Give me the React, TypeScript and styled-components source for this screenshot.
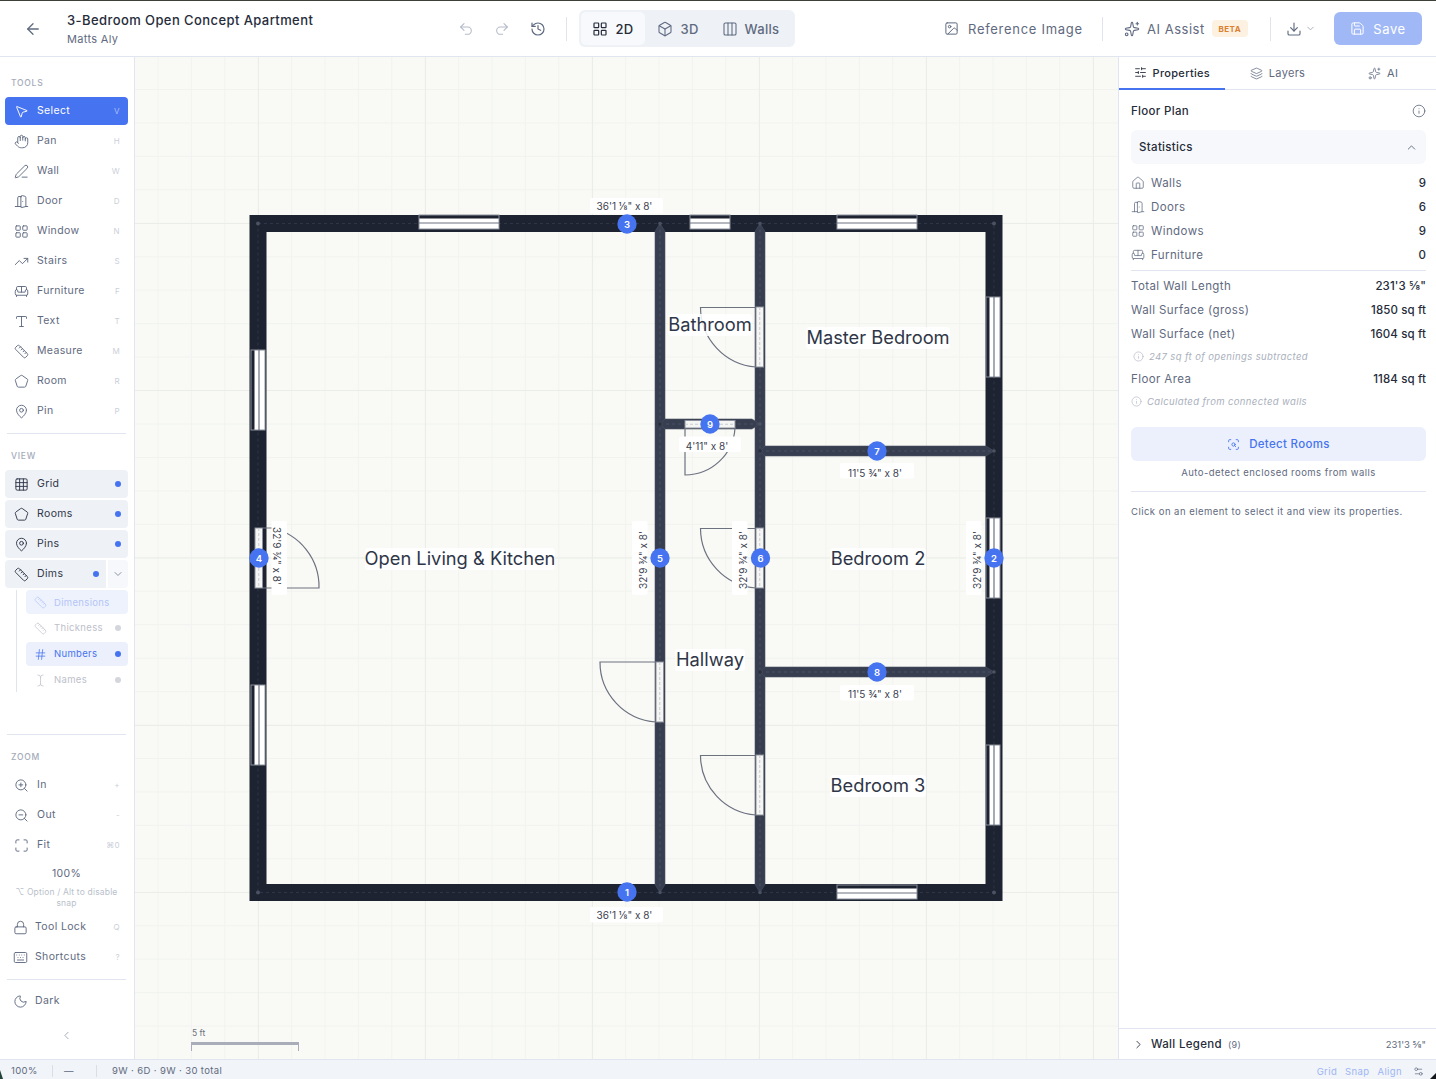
import React from "react";
import styled, { createGlobalStyle } from "styled-components";
import {
  ArrowLeft, Undo2, Redo2, History, LayoutGrid, Box, Columns3, Image as ImageIcon, Sparkles, Download,
  ChevronDown, ChevronUp, ChevronLeft, ChevronRight, Save, SlidersHorizontal, Layers, Info, Home, DoorOpen,
  MousePointer2, Hand, PenLine, TrendingUp, Sofa, Type, Ruler, Pentagon, MapPin, Grid3x3, Hash, TextCursor,
  ZoomIn, ZoomOut, Maximize, Lock, Keyboard, Moon, ScanSearch, Settings2,
} from "lucide-react";

const FONT = `Inter, "Noto Sans", "Liberation Sans", sans-serif`;
const BLUE = "#4673f0";
const INK = "#5f6a80";
const BORDER = "#e0e5f0";

const Global = createGlobalStyle`
  html, body { margin: 0; padding: 0; height: 100%; background: #fff; }
  body { font-family: ${FONT}; overflow: hidden; }
  #root { height: 100%; }
  * { box-sizing: border-box; }
`;

const Page = styled.div`
  position: relative; width: 1436px; height: 1079px; display: flex; flex-direction: column;
  border-top: 1px solid #3c4038; overflow: hidden; color: ${INK}; letter-spacing: 0.02em;
`;
const Header = styled.header`
  height: 56px; flex: none; display: flex; align-items: center; border-bottom: 1px solid ${BORDER}; background: #fff;
`;
const BackButton = styled.div` width: 67px; display: flex; justify-content: center; padding-right: 1px; color: ${INK}; `;
const TitleBlock = styled.div` width: 391px; display: flex; flex-direction: column; gap: 5px; padding-top: 1px; `;
const Title = styled.div` font-size: 13px; line-height: 15px; font-weight: 500; color: #262c3a; letter-spacing: 0.032em; `;
const Sub = styled.div` font-size: 11px; line-height: 13px; color: ${INK}; letter-spacing: 0.03em; `;
const HistoryGroup = styled.div` display: flex; gap: 20px; width: 108px; `;
const HistIcon = styled.span<{ $dim?: boolean }>` display: flex; color: ${(p) => (p.$dim ? "#b4bbc8" : INK)}; `;
const VDivider = styled.div` width: 1px; height: 24px; background: #e0e4ec; flex: none; `;
const Segment = styled.div`
  margin-left: 12px; height: 37px; width: 216px; padding: 2px; border-radius: 6px; background: #eef1f6; display: flex; align-items: stretch;
`;
const SegItem = styled.div<{ $active?: boolean; $w: number }>`
  width: ${(p) => p.$w}px; display: flex; align-items: center; justify-content: center; gap: 7px; border-radius: 5px; font-size: 13px; font-weight: 500;
  color: ${(p) => (p.$active ? "#262c3a" : INK)}; background: ${(p) => (p.$active ? "#f7f9fc" : "transparent")};
`;
const RefButton = styled.div` margin-left: 149px; width: 158px; display: flex; align-items: center; gap: 9px; font-size: 13px; letter-spacing: 0.055em; `;
const AiButton = styled.div` margin-left: 21px; width: 146px; display: flex; align-items: center; gap: 7px; font-size: 13px; letter-spacing: 0.04em; `;
const Beta = styled.span`
  background: #fdf1e2; color: #d9812f; font-size: 8px; font-weight: 700; letter-spacing: 0.06em; height: 17px; width: 36px;
  border-radius: 4px; display: flex; align-items: center; justify-content: center;
`;
const DownloadButton = styled.div` margin-left: 15px; width: 49px; display: flex; align-items: center; gap: 3px; `;
const SaveButton = styled.div`
  width: 88px; height: 33px; border-radius: 6px; background: #a0b9f6; color: #fff; font-size: 13px; letter-spacing: 0.05em; margin-left: -1px;
  display: flex; align-items: center; justify-content: center; gap: 8px;
`;

const Main = styled.div` flex: 1; display: flex; min-height: 0; `;
const Sidebar = styled.aside`
  width: 135px; flex: none; border-right: 1px solid ${BORDER}; padding: 20px 6px 0 5px; display: flex; flex-direction: column; background: #fff;
`;
const SectionLabel = styled.div`
  font-size: 8.5px; line-height: 12px; letter-spacing: 0.09em; color: #a4abb9; padding-left: 6px; font-weight: 500; margin-bottom: 8px;
`;
const Stack = styled.div` display: flex; flex-direction: column; gap: 2px; `;
const BottomStack = styled(Stack)` margin-top: 4px; `;
const Row = styled.div<{ $active?: boolean; $tint?: boolean }>`
  height: 28px; flex: none; display: flex; align-items: center; border-radius: 4px; padding: 0 8px 0 9px;
  font-size: 10.5px; letter-spacing: 0.035em;
  background: ${(p) => (p.$active ? BLUE : p.$tint ? "#eef1f6" : "transparent")};
  color: ${(p) => (p.$active ? "#fff" : p.$tint ? "#2e3546" : INK)};
`;
const RowIcon = styled.span` width: 23px; flex: none; display: flex; `;
const RowText = styled.span` flex: 1; white-space: nowrap; padding-bottom: 1px; `;
const Key = styled.span<{ $active?: boolean }>` font-size: 8px; color: ${(p) => (p.$active ? "#a9bdf7" : "#cbd0d9")}; `;
const Dot = styled.span<{ $off?: boolean }>`
  width: 6px; height: 6px; border-radius: 50%; flex: none; margin-right: -1px;
  background: ${(p) => (p.$off ? "#d3d6dc" : BLUE)};
`;
const Split = styled.div` display: flex; gap: 2px; height: 28px; `;
const SplitMain = styled(Row)` flex: 1; border-radius: 4px 0 0 4px; `;
const Caret = styled.div` width: 20px; background: #f6f8fb; border-radius: 0 4px 4px 0; display: flex; align-items: center; justify-content: center; color: #8a93a5; `;
const SubTree = styled.div`
  margin: 2px 0 0 11px; padding-left: 9px; border-left: 1px solid #e0e4ec; display: flex; flex-direction: column; gap: 2px; height: 102px;
`;
const SubRow = styled.div<{ $tint?: string; $color: string }>`
  height: 24px; flex: none; display: flex; align-items: center; padding: 0 8px; border-radius: 4px; font-size: 9.5px; letter-spacing: 0.035em;
  background: ${(p) => p.$tint || "transparent"}; color: ${(p) => p.$color};
`;
const SubIcon = styled.span` width: 20px; flex: none; display: flex; `;
const Divider = styled.div<{ $top?: number; $bottom?: number }>`
  height: 1px; background: ${BORDER}; margin: ${(p) => p.$top ?? 0}px 2px ${(p) => p.$bottom ?? 0}px 2px; flex: none;
`;
const Percent = styled.div` text-align: center; font-size: 10.5px; line-height: 14px; margin-top: 8px; color: ${INK}; `;
const Hint = styled.div` text-align: center; font-size: 8.5px; line-height: 11px; margin-top: 6px; color: #b9bfcb; padding: 0 2px; letter-spacing: 0.02em; `;
const ToolRow = styled(Row)` padding-left: 8px; `;
const ToolIcon = styled.span` width: 22px; flex: none; display: flex; `;
const Collapse = styled.div` display: flex; justify-content: center; margin-top: 14px; color: #99a1b1; `;

const Canvas = styled.main` flex: 1; min-width: 0; background: #f9faf6; `;
const Plan = styled.svg` display: block; width: 100%; height: 100%; letter-spacing: 0; `;

const Panel = styled.aside` width: 318px; flex: none; border-left: 1px solid ${BORDER}; display: flex; flex-direction: column; background: #fff; `;
const Tabs = styled.div` height: 33px; flex: none; display: flex; border-bottom: 1px solid ${BORDER}; `;
const Tab = styled.div<{ $active?: boolean }>`
  flex: 1; display: flex; align-items: center; justify-content: center; gap: 6px; font-size: 11px; margin-bottom: -1px;
  color: ${(p) => (p.$active ? "#262c3a" : INK)}; font-weight: ${(p) => (p.$active ? 500 : 400)};
  border-bottom: 2px solid ${(p) => (p.$active ? BLUE : "transparent")}; padding-top: ${(p) => (p.$active ? 0 : 1)}px;
`;
const Body = styled.div` flex: 1; padding: 0 10px 0 12px; display: flex; flex-direction: column; `;
const PanelHead = styled.div` height: 40px; padding-top: 1px; display: flex; align-items: center; justify-content: space-between; font-size: 11.5px; font-weight: 500; color: #262c3a; `;
const InfoIcon = styled.span` display: flex; color: ${INK}; `;
const Accordion = styled.div`
  height: 34px; border-radius: 6px; background: #f6f8fb; padding: 0 8px; display: flex; align-items: center; justify-content: space-between;
  font-size: 11.5px; font-weight: 500; color: #262c3a; margin-bottom: 7px;
`;
const StatRow = styled.div`
  height: 24px; flex: none; display: flex; align-items: center; justify-content: space-between; font-size: 11.5px; color: ${INK}; letter-spacing: 0.035em;
`;
const StatLabel = styled.span` display: flex; align-items: center; gap: 6px; `;
const StatValue = styled.span` color: #262c3a; font-weight: 500; letter-spacing: 0.01em; `;
const Rule = styled.div<{ $top?: number; $bottom?: number }>` height: 1px; background: ${BORDER}; margin: ${(p) => p.$top ?? 0}px 0 ${(p) => p.$bottom ?? 0}px; flex: none; `;
const Note = styled.div<{ $indent?: number }>`
  height: 21px; flex: none; display: flex; align-items: center; gap: 5px; font-size: 9.5px; font-style: italic; color: #aab0bd; padding-left: ${(p) => p.$indent ?? 0}px; letter-spacing: 0.04em;
`;
const Detect = styled.div`
  height: 34px; margin-top: 15px; flex: none; border-radius: 6px; background: #ebf0fc; color: ${BLUE}; font-size: 11.5px; font-weight: 500;
  display: flex; align-items: center; justify-content: center; gap: 9px;
`;
const DetectHint = styled.div` text-align: center; font-size: 9.5px; line-height: 12px; margin: 6px 0 12px; color: ${INK}; letter-spacing: 0.05em; `;
const ClickHint = styled.div` font-size: 9.5px; line-height: 12px; margin-top: 14px; color: ${INK}; letter-spacing: 0.05em; `;
const Legend = styled.div`
  height: 31px; flex: none; border-top: 1px solid ${BORDER}; display: flex; align-items: center; padding: 0 10px 0 13px; font-size: 11.5px; color: #262c3a; font-weight: 500;
`;
const LegendCount = styled.span` margin-left: 6px; font-size: 9px; font-weight: 400; color: ${INK}; `;
const LegendLen = styled.span` margin-left: auto; font-size: 9.5px; font-weight: 400; color: ${INK}; letter-spacing: 0; `;
const LegendIcon = styled.span` display: flex; width: 19px; `;

const Status = styled.footer`
  height: 20px; flex: none; background: #f1f4f8; border-top: 1px solid ${BORDER}; display: flex; align-items: center; padding-top: 3px; font-size: 9.5px; color: ${INK}; letter-spacing: 0.04em;
`;
const StatusCell = styled.span<{ $w: number; $sep?: boolean; $pad?: number }>`
  width: ${(p) => p.$w}px; padding-left: ${(p) => p.$pad ?? 11}px; height: 12px; line-height: 12px; flex: none; border-right: ${(p) => (p.$sep ? "1px solid #d9dee8" : "none")};
`;
const StatusRight = styled.div` margin-left: auto; display: flex; align-items: center; gap: 8px; padding-right: 12px; color: #9db4f4; `;
const SettingsIcon = styled.span` display: flex; color: ${INK}; margin-left: 3px; `;
const CornerLeft = styled.div`
  position: absolute; left: 0; bottom: 0; width: 3px; height: 9px; background: #23443a; clip-path: polygon(0 0, 100% 100%, 0 100%);
`;
const CornerRight = styled.div`
  position: absolute; right: 0; bottom: 0; width: 6px; height: 6px; background: #15181c; clip-path: polygon(100% 0, 100% 100%, 0 100%);
`;

const tools: [string, any, string][] = [
  ["Select", MousePointer2, "V"], ["Pan", Hand, "H"], ["Wall", PenLine, "W"], ["Door", DoorOpen, "D"], ["Window", LayoutGrid, "N"],
  ["Stairs", TrendingUp, "S"], ["Furniture", Sofa, "F"], ["Text", Type, "T"], ["Measure", Ruler, "M"], ["Room", Pentagon, "R"], ["Pin", MapPin, "P"],
];

const WALL_DARK = "#1d2330";
const WALL_IN = "#373e4f";

const range = (from: number, to: number, step: number) => {
  const out: number[] = [];
  for (let v = from; v <= to; v += step) out.push(v);
  return out;
};

function Win({ x, y, len, vertical }: { x: number; y: number; len: number; vertical?: boolean }) {
  if (vertical) {
    return (
      <g>
        <rect x={x + 3.5} y={y} width={10.5} height={len} fill="#fff" />
        <rect x={x} y={y} width={14} height={len} fill="none" stroke="#8b909c" strokeWidth={1} />
        <line x1={x + 8} y1={y} x2={x + 8} y2={y + len} stroke="#6c7280" strokeWidth={1.2} />
      </g>
    );
  }
  return (
    <g>
      <rect x={x} y={y + 3.5} width={len} height={10.5} fill="#fff" />
      <rect x={x} y={y} width={len} height={14} fill="none" stroke="#8b909c" strokeWidth={1} />
      <line x1={x} y1={y + 8} x2={x + len} y2={y + 8} stroke="#6c7280" strokeWidth={1.2} />
    </g>
  );
}

function DoorRect({ x, y, len, horizontal }: { x: number; y: number; len: number; horizontal?: boolean }) {
  return horizontal ? (
    <g>
      <rect x={x} y={y} width={len} height={7.5} fill="#f5f5f4" stroke="#8b909c" />
      <line x1={x} y1={y + 3.75} x2={x + len} y2={y + 3.75} stroke="#c9ccd2" strokeDasharray="3 2" />
    </g>
  ) : (
    <g>
      <rect x={x} y={y} width={7.5} height={len} fill="#f5f5f4" stroke="#8b909c" />
      <line x1={x + 3.75} y1={y} x2={x + 3.75} y2={y + len} stroke="#c9ccd2" strokeDasharray="3 2" />
    </g>
  );
}

function Dim({ cx, cy, text, rot, w = 74, tx = -2, ty = 0 }: { cx: number; cy: number; text: string; rot?: number; w?: number; tx?: number; ty?: number }) {
  const top = rot ? cy - 11 : cy - 8;
  return (
    <g transform={rot ? `rotate(${rot} ${cx} ${cy})` : undefined}>
      <rect x={cx - w / 2} y={top} width={w} height={15.5} rx={2} fill="#fff" />
      <text x={cx + tx} y={cy + 3.5 + ty} textAnchor="middle" fontSize={10} fontFamily={FONT} fill="#3b4150">{text}</text>
    </g>
  );
}

function RoomLabel({ cx, cy, text, w }: { cx: number; cy: number; text: string; w: number }) {
  return (
    <g>
      <rect x={cx - w / 2} y={cy - 11} width={w} height={22} rx={3} fill="#fff" opacity={0.85} />
      <text x={cx} y={cy + 6} textAnchor="middle" fontSize={18.3} fontFamily={FONT} fill="#2f3648">{text}</text>
    </g>
  );
}

function Badge({ cx, cy, n }: { cx: number; cy: number; n: number }) {
  return (
    <g>
      <circle cx={cx} cy={cy} r={9.7} fill={BLUE} />
      <text x={cx} y={cy + 3.5} textAnchor="middle" fontSize={9.5} fontWeight={600} fontFamily={FONT} fill="#fff">{n}</text>
    </g>
  );
}

function VWall({ x, y1, y2 }: { x: number; y1: number; y2: number }) {
  const p = `${x - 5},${y1 + 8} ${x},${y1} ${x + 5},${y1 + 8} ${x + 5},${y2 - 8} ${x},${y2} ${x - 5},${y2 - 8}`;
  return (
    <g>
      <polygon points={p} fill={WALL_IN} stroke="#4b5263" strokeWidth={0.6} />
      <line x1={x} y1={y1} x2={x} y2={y2} stroke="#4e5668" strokeWidth={0.8} strokeDasharray="3 3" />
      <circle cx={x} cy={y1} r={1.8} fill="#4b5263" />
      <circle cx={x} cy={y2} r={1.8} fill="#4b5263" />
    </g>
  );
}

function HWall({ y, x1, x2 }: { y: number; x1: number; x2: number }) {
  const p = `${x1 + 5},${y - 5} ${x2 - 8},${y - 5} ${x2},${y} ${x2 - 8},${y + 5} ${x1 + 5},${y + 5} ${x1},${y}`;
  return (
    <g>
      <polygon points={p} fill={WALL_IN} stroke="#4b5263" strokeWidth={0.6} />
      <line x1={x1} y1={y} x2={x2} y2={y} stroke="#4e5668" strokeWidth={0.8} strokeDasharray="3 3" />
      <circle cx={x1} cy={y} r={1.8} fill="#2a3040" />
      <circle cx={x2} cy={y} r={1.8} fill="#4b5263" />
    </g>
  );
}

const LEAF = { fill: "none", stroke: "#6d7280", strokeWidth: 1.2 };

function FloorPlan() {
  return (
    <Plan viewBox="135 57 983 1002" preserveAspectRatio="xMinYMin meet">
      <g stroke="#f2f3ef" strokeWidth={1}>
        {range(158, 1118, 33.4).map((x) => <line key={x} x1={x} y1={57} x2={x} y2={1059} />)}
        {range(89.5, 1059, 33.45).map((y) => <line key={y} x1={135} y1={y} x2={1118} y2={y} />)}
      </g>
      <g stroke="#ebede8" strokeWidth={1}>
        {[258.5, 425.5, 592.5, 759.5, 926.5, 1093.5].map((x) => <line key={x} x1={x} y1={57} x2={x} y2={1059} />)}
        {[223.5, 390.5, 558, 725.5, 892.5].map((y) => <line key={y} x1={135} y1={y} x2={1118} y2={y} />)}
      </g>

      <rect x={258} y={223.5} width={736} height={669} fill="none" stroke={WALL_DARK} strokeWidth={17} strokeLinejoin="miter" />
      <rect x={258} y={223.5} width={736} height={669} fill="none" stroke="#333a4a" strokeWidth={0.8} strokeDasharray="3 3" />
      {[[258, 223.5], [994, 223.5], [258, 892.5], [994, 892.5]].map(([x, y]) => <circle key={`${x}-${y}`} cx={x} cy={y} r={2} fill="#4b5263" />)}

      <VWall x={660} y1={223.5} y2={892.5} />
      <VWall x={760} y1={223.5} y2={892.5} />
      <HWall y={451} x1={760} x2={994} />
      <HWall y={672} x1={760} x2={994} />
      <HWall y={424} x1={660} x2={760} />

      <Win x={419} y={215} len={80} />
      <Win x={690} y={215} len={40} />
      <Win x={837} y={215} len={80} />
      <Win x={837} y={885} len={80} />
      <Win x={986} y={297} len={80} vertical />
      <Win x={986} y={518} len={80} vertical />
      <Win x={986} y={745} len={80} vertical />
      <Win x={251} y={350} len={80} vertical />
      <Win x={251} y={685} len={80} vertical />

      <DoorRect x={756} y={307} len={60} />
      <DoorRect x={756} y={528} len={60} />
      <DoorRect x={756} y={755} len={60} />
      <DoorRect x={656} y={662} len={60} />
      <DoorRect x={685} y={420.5} len={50} horizontal />
      <DoorRect x={255} y={528} len={60} />

      <path d="M756 307.5 H700.5 A60 60 0 0 0 756 367" {...LEAF} />
      <path d="M756 528.5 H700.5 A60 60 0 0 0 756 588" {...LEAF} />
      <path d="M756 755.5 H700.5 A60 60 0 0 0 756 815" {...LEAF} />
      <path d="M656 662 H600 A60 60 0 0 0 656 722" {...LEAF} />
      <path d="M685 428 V475 A50 50 0 0 0 735 428" {...LEAF} />
      <path d="M263 528 H272 A60 60 0 0 1 319 588 H263" {...LEAF} />

      <Dim cx={626.5} cy={206} text={'36\'1 ⅛" x 8\''} w={73} />
      <Dim cx={626.5} cy={915} text={'36\'1 ⅛" x 8\''} w={73} />
      <Dim cx={877} cy={471} text={'11\'5 ¾" x 8\''} w={74} ty={2} />
      <Dim cx={877} cy={693} text={'11\'5 ¾" x 8\''} w={74} ty={1} />
      <Dim cx={710} cy={444.5} text={'4\'11" x 8\''} w={62} tx={-3} ty={1.5} />
      <Dim cx={643} cy={558} rot={-90} text={'32\'9 ¾" x 8\''} />
      <Dim cx={743} cy={558} rot={-90} text={'32\'9 ¾" x 8\''} />
      <Dim cx={977} cy={558} rot={-90} text={'32\'9 ¾" x 8\''} />
      <Dim cx={276} cy={558} rot={90} text={'32\'9 ¾" x 8\''} />

      <RoomLabel cx={710} cy={325} text="Bathroom" w={84} />
      <RoomLabel cx={878} cy={338} text="Master Bedroom" w={144} />
      <RoomLabel cx={460} cy={559} text="Open Living & Kitchen" w={190} />
      <RoomLabel cx={878} cy={559} text="Bedroom 2" w={96} />
      <RoomLabel cx={710} cy={660} text="Hallway" w={70} />
      <RoomLabel cx={878} cy={786} text="Bedroom 3" w={96} />

      <Badge cx={627} cy={892} n={1} />
      <Badge cx={994} cy={558} n={2} />
      <Badge cx={627} cy={224} n={3} />
      <Badge cx={259} cy={558} n={4} />
      <Badge cx={660} cy={558} n={5} />
      <Badge cx={760.5} cy={558} n={6} />
      <Badge cx={877} cy={451} n={7} />
      <Badge cx={877} cy={672} n={8} />
      <Badge cx={710} cy={424} n={9} />

      <text x={192} y={1036} fontSize={8.5} fontFamily={FONT} fill="#6b7280">5 ft</text>
      <rect x={191.5} y={1042} width={107} height={3} fill="#a8adb9" />
      <line x1={191.5} y1={1042} x2={191.5} y2={1051} stroke="#a8adb9" />
      <line x1={298.5} y1={1042} x2={298.5} y2={1051} stroke="#a8adb9" />
    </Plan>
  );
}

export default function App() {
  return (
    <Page>
      <Global />
      <Header>
        <BackButton><ArrowLeft size={18} strokeWidth={1.7} /></BackButton>
        <TitleBlock>
          <Title>3-Bedroom Open Concept Apartment</Title>
          <Sub>Matts Aly</Sub>
        </TitleBlock>
        <HistoryGroup>
          <HistIcon $dim><Undo2 size={16} strokeWidth={1.6} /></HistIcon>
          <HistIcon $dim><Redo2 size={16} strokeWidth={1.6} /></HistIcon>
          <HistIcon><History size={16} strokeWidth={1.8} /></HistIcon>
        </HistoryGroup>
        <VDivider />
        <Segment>
          <SegItem $active $w={64}><LayoutGrid size={16} strokeWidth={1.8} />2D</SegItem>
          <SegItem $w={66}><Box size={16} strokeWidth={1.6} />3D</SegItem>
          <SegItem $w={79}><Columns3 size={16} strokeWidth={1.6} />Walls</SegItem>
        </Segment>
        <RefButton><ImageIcon size={15} strokeWidth={1.6} />Reference Image</RefButton>
        <VDivider />
        <AiButton><Sparkles size={16} strokeWidth={1.6} />AI Assist<Beta>BETA</Beta></AiButton>
        <VDivider />
        <DownloadButton><Download size={16} strokeWidth={1.7} /><ChevronDown size={11} color="#a4abb9" /></DownloadButton>
        <SaveButton><Save size={15} strokeWidth={1.6} />Save</SaveButton>
      </Header>
      <Main>
        <Sidebar>
          <SectionLabel>TOOLS</SectionLabel>
          <Stack>
            {tools.map(([name, Icon, key], i) => (
              <Row key={name} $active={i === 0}>
                <RowIcon><Icon size={15} strokeWidth={1.5} /></RowIcon>
                <RowText>{name}</RowText>
                <Key $active={i === 0}>{key}</Key>
              </Row>
            ))}
          </Stack>
          <Divider $top={8} $bottom={16} />
          <SectionLabel>VIEW</SectionLabel>
          <Stack>
            <Row $tint><RowIcon><Grid3x3 size={15} strokeWidth={1.5} /></RowIcon><RowText>Grid</RowText><Dot /></Row>
            <Row $tint><RowIcon><Pentagon size={15} strokeWidth={1.5} /></RowIcon><RowText>Rooms</RowText><Dot /></Row>
            <Row $tint><RowIcon><MapPin size={15} strokeWidth={1.5} /></RowIcon><RowText>Pins</RowText><Dot /></Row>
            <Split>
              <SplitMain $tint><RowIcon><Ruler size={15} strokeWidth={1.5} /></RowIcon><RowText>Dims</RowText><Dot /></SplitMain>
              <Caret><ChevronDown size={12} /></Caret>
            </Split>
          </Stack>
          <SubTree>
            <SubRow $tint="#eef2fd" $color="#b3c5f6"><SubIcon><Ruler size={13} strokeWidth={1.3} /></SubIcon>Dimensions</SubRow>
            <SubRow $color="#bdc1ca"><SubIcon><Ruler size={13} strokeWidth={1.3} /></SubIcon><RowText>Thickness</RowText><Dot $off /></SubRow>
            <SubRow $tint="#ebf0fc" $color={BLUE}><SubIcon><Hash size={13} strokeWidth={1.4} /></SubIcon><RowText>Numbers</RowText><Dot /></SubRow>
            <SubRow $color="#bdc1ca"><SubIcon><TextCursor size={13} strokeWidth={1.3} /></SubIcon><RowText>Names</RowText><Dot $off /></SubRow>
          </SubTree>
          <Divider $top={42} $bottom={16} />
          <SectionLabel>ZOOM</SectionLabel>
          <Stack>
            <Row><RowIcon><ZoomIn size={15} strokeWidth={1.5} /></RowIcon><RowText>In</RowText><Key>+</Key></Row>
            <Row><RowIcon><ZoomOut size={15} strokeWidth={1.5} /></RowIcon><RowText>Out</RowText><Key>-</Key></Row>
            <Row><RowIcon><Maximize size={15} strokeWidth={1.5} /></RowIcon><RowText>Fit</RowText><Key>⌘0</Key></Row>
          </Stack>
          <Percent>100%</Percent>
          <Hint>⌥ Option / Alt to disable snap</Hint>
          <BottomStack>
            <ToolRow><ToolIcon><Lock size={15} strokeWidth={1.5} /></ToolIcon><RowText>Tool Lock</RowText><Key>Q</Key></ToolRow>
            <ToolRow><ToolIcon><Keyboard size={15} strokeWidth={1.5} /></ToolIcon><RowText>Shortcuts</RowText><Key>?</Key></ToolRow>
          </BottomStack>
          <Divider $top={8} $bottom={7} />
          <ToolRow><ToolIcon><Moon size={15} strokeWidth={1.5} /></ToolIcon><RowText>Dark</RowText></ToolRow>
          <Collapse><ChevronLeft size={13} strokeWidth={1.6} /></Collapse>
        </Sidebar>
        <Canvas><FloorPlan /></Canvas>
        <Panel>
          <Tabs>
            <Tab $active><SlidersHorizontal size={13} strokeWidth={1.6} />Properties</Tab>
            <Tab><Layers size={13} strokeWidth={1.4} />Layers</Tab>
            <Tab><Sparkles size={13} strokeWidth={1.4} />AI</Tab>
          </Tabs>
          <Body>
            <PanelHead>Floor Plan<InfoIcon><Info size={14} strokeWidth={1.4} /></InfoIcon></PanelHead>
            <Accordion>Statistics<ChevronUp size={13} strokeWidth={1.7} color={INK} /></Accordion>
            <StatRow><StatLabel><Home size={14} strokeWidth={1.3} />Walls</StatLabel><StatValue>9</StatValue></StatRow>
            <StatRow><StatLabel><DoorOpen size={14} strokeWidth={1.3} />Doors</StatLabel><StatValue>6</StatValue></StatRow>
            <StatRow><StatLabel><LayoutGrid size={14} strokeWidth={1.3} />Windows</StatLabel><StatValue>9</StatValue></StatRow>
            <StatRow><StatLabel><Sofa size={14} strokeWidth={1.3} />Furniture</StatLabel><StatValue>0</StatValue></StatRow>
            <Rule $top={3} $bottom={3} />
            <StatRow>Total Wall Length<StatValue>231'3 ⅝"</StatValue></StatRow>
            <StatRow>Wall Surface (gross)<StatValue>1850 sq ft</StatValue></StatRow>
            <StatRow>Wall Surface (net)<StatValue>1604 sq ft</StatValue></StatRow>
            <Note $indent={2}><Info size={11} strokeWidth={1.3} />247 sq ft of openings subtracted</Note>
            <StatRow>Floor Area<StatValue>1184 sq ft</StatValue></StatRow>
            <Note><Info size={11} strokeWidth={1.3} />Calculated from connected walls</Note>
            <Detect><ScanSearch size={13} strokeWidth={1.6} />Detect Rooms</Detect>
            <DetectHint>Auto-detect enclosed rooms from walls</DetectHint>
            <Rule />
            <ClickHint>Click on an element to select it and view its properties.</ClickHint>
          </Body>
          <Legend>
            <LegendIcon><ChevronRight size={13} strokeWidth={1.6} /></LegendIcon>
            Wall Legend<LegendCount>(9)</LegendCount>
            <LegendLen>231'3 ⅝"</LegendLen>
          </Legend>
        </Panel>
      </Main>
      <Status>
        <StatusCell $w={53} $sep>100%</StatusCell>
        <StatusCell $w={44} $sep>—</StatusCell>
        <StatusCell $w={200} $pad={15}>9W · 6D · 9W · 30 total</StatusCell>
        <StatusRight>
          <span>Grid</span><span>Snap</span><span>Align</span>
          <SettingsIcon><Settings2 size={11} strokeWidth={1.5} /></SettingsIcon>
        </StatusRight>
      </Status>
      <CornerLeft />
      <CornerRight />
    </Page>
  );
}
